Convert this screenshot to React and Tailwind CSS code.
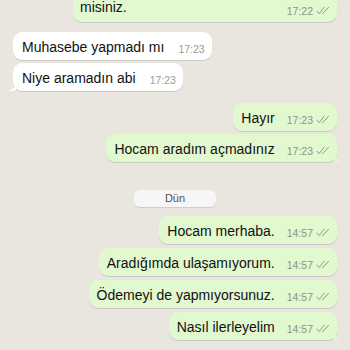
import React from "react";

function Checks() {
  return (
    <svg width="14" height="9" viewBox="0 0 14 9" fill="none" className="ml-[3px] mb-[1px]">
      <path d="M1 5.2 L3.2 7.6 L8.2 1.2" stroke="#8c9a86" strokeWidth="1" strokeLinecap="round" strokeLinejoin="round" />
      <path d="M6.2 7.4 L6.6 7.7 L12.6 1.2" stroke="#8c9a86" strokeWidth="1" strokeLinecap="round" strokeLinejoin="round" />
    </svg>
  );
}

function Out({ text, time, tail }) {
  return (
    <div className="flex justify-end">
      <div className="relative flex items-end h-[28px] rounded-[9px] bg-[#e2f8cf] pl-[8px] pr-[7px] shadow-[0_1px_0.5px_rgba(0,0,0,0.12)]">
        <span className="self-center text-[14px] leading-[18px] text-[#111] mt-[1px]">{text}</span>
        <span className="flex items-center ml-[12px] mb-[5px] text-[10.5px] leading-[12px] text-[#8a9585]">
          {time}
          <Checks />
        </span>
        {tail && (
          <svg className="absolute right-[-5px] bottom-0" width="8" height="10" viewBox="0 0 8 10">
            <path d="M0 0 C0 5 2 8 8 10 C4 10 1 9.5 0 9 Z" fill="#e2f8cf" />
          </svg>
        )}
      </div>
    </div>
  );
}

function In({ text, time, tail }) {
  return (
    <div className="flex justify-start">
      <div className="relative flex items-end h-[28px] rounded-[9px] bg-white pl-[9px] pr-[7px] shadow-[0_1px_0.5px_rgba(0,0,0,0.12)]">
        <span className="self-center text-[14px] leading-[18px] text-[#111] mt-[1px]">{text}</span>
        <span className="ml-[14px] mb-[5px] text-[10.5px] leading-[12px] text-[#9a9a9a]">{time}</span>
        {tail && (
          <svg className="absolute left-[-5px] bottom-0" width="8" height="10" viewBox="0 0 8 10">
            <path d="M8 0 C8 5 6 8 0 10 C4 10 7 9.5 8 9 Z" fill="#ffffff" />
          </svg>
        )}
      </div>
    </div>
  );
}

export default function App() {
  return (
    <div
      className="w-[350px] h-[350px] overflow-hidden bg-[#e9e6e0] px-[13px]"
      style={{ fontFamily: '"Liberation Sans", Arial, sans-serif' }}
    >
      <div className="flex flex-col">
        <div className="flex justify-end -mt-[20px]">
          <div className="relative flex items-end justify-between w-[264px] h-[42px] rounded-[9px] bg-[#e2f8cf] pl-[7px] pr-[7px] shadow-[0_1px_0.5px_rgba(0,0,0,0.12)]">
            <span className="text-[14px] leading-[18px] text-[#111] mb-[6px]">misiniz.</span>
            <span className="flex items-center mb-[5px] text-[10.5px] leading-[12px] text-[#8a9585]">
              17:22
              <Checks />
            </span>
          </div>
        </div>

        <div className="flex flex-col gap-[3px] mt-[10px]">
          <In text="Muhasebe yapmadı mı" time="17:23" />
          <In text="Niye aramadın abi" time="17:23" tail />
        </div>

        <div className="flex flex-col gap-[3px] mt-[12px]">
          <Out text="Hayır" time="17:23" />
          <Out text="Hocam aradım açmadınız" time="17:23" tail />
        </div>

        <div className="flex justify-center mt-[28px]">
          <div className="w-[82px] h-[17px] rounded-[6px] bg-[#f6f6f4] flex items-center justify-center text-[11px] font-medium text-[#555] shadow-[0_1px_0.5px_rgba(0,0,0,0.1)]">
            Dün
          </div>
        </div>

        <div className="flex flex-col gap-[4px] mt-[9px]">
          <Out text="Hocam merhaba." time="14:57" />
          <Out text="Aradığımda ulaşamıyorum." time="14:57" />
          <Out text="Ödemeyi de yapmıyorsunuz." time="14:57" />
          <Out text="Nasıl ilerleyelim" time="14:57" tail />
        </div>
      </div>
    </div>
  );
}
